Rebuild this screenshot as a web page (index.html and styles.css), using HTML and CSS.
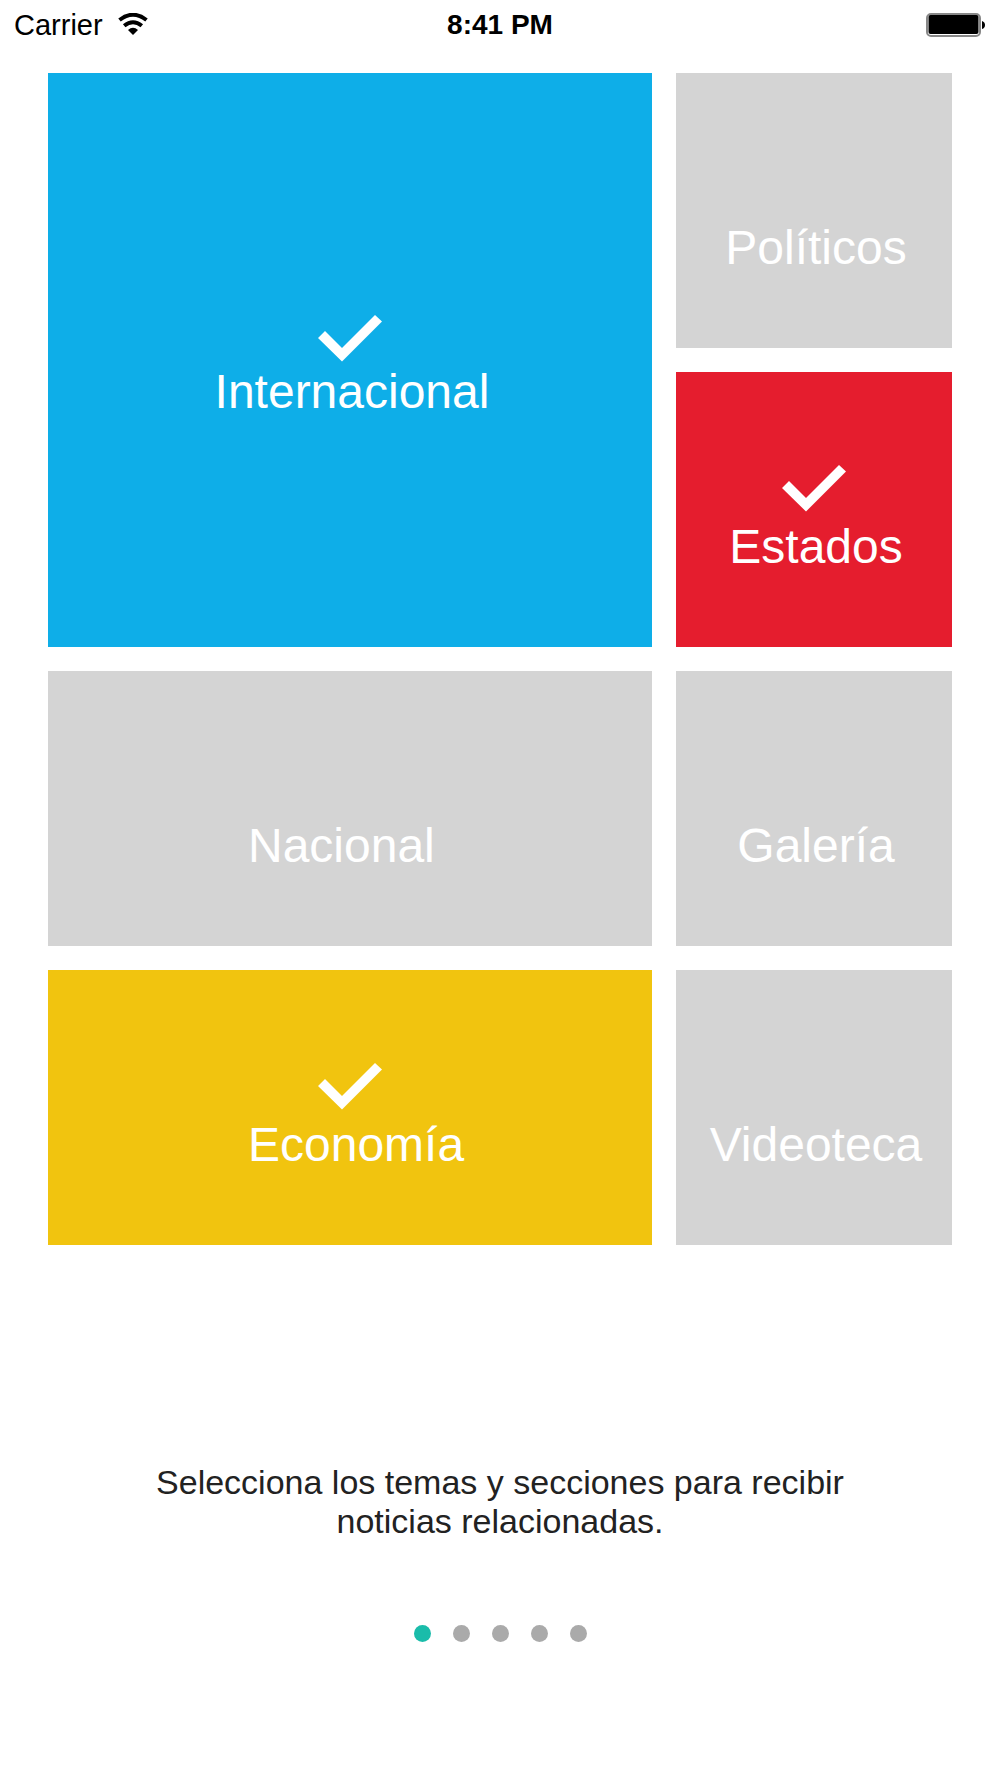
FILE: index.html
```
<!DOCTYPE html>
<html lang="es">
<head>
<meta charset="utf-8">
<meta name="viewport" content="width=device-width, initial-scale=1">
<title>Temas</title>
<link rel="stylesheet" href="styles.css">
</head>
<body>
<header class="status">
  <div class="carrier"><span>Carrier</span>
    <svg class="wifi" viewBox="0 0 30 22" aria-hidden="true"><path d="M1.500 7Q15-3.500 28.500 7" /><path d="M6.200 12.800Q15 5.800 23.800 12.800" /><path class="dot" d="M10 17Q15 12.500 20 17L15 22z" /></svg>
  </div>
  <time class="clock">8:41 PM</time>
  <svg class="battery" viewBox="0 0 60 24" aria-hidden="true"><rect class="shell" x="1" y="1" width="53" height="22" rx="4" /><rect x="2.500" y="2" width="50" height="19" rx="2" /><path d="M56 8q3 1 3 4t-3 4z" /></svg>
</header>
<main>
  <div class="tiles">
    <button class="tile tall blue" aria-pressed="true"><svg class="check" viewBox="0 0 64 48" aria-hidden="true"><path d="M0 24L7 17L24 34L57 1L64 7.500L24 47.500z" /></svg><span class="label">Internacional</span></button>
    <button class="tile" aria-pressed="false"><span class="label">Políticos</span></button>
    <button class="tile red" aria-pressed="true"><svg class="check" viewBox="0 0 64 48" aria-hidden="true"><path d="M0 24L7 17L24 34L57 1L64 7.500L24 47.500z" /></svg><span class="label">Estados</span></button>
    <button class="tile wide" aria-pressed="false"><span class="label">Nacional</span></button>
    <button class="tile" aria-pressed="false"><span class="label">Galería</span></button>
    <button class="tile wide yellow" aria-pressed="true"><svg class="check" viewBox="0 0 64 48" aria-hidden="true"><path d="M0 24L7 17L24 34L57 1L64 7.500L24 47.500z" /></svg><span class="label">Economía</span></button>
    <button class="tile" aria-pressed="false"><span class="label">Videoteca</span></button>
  </div>
  <p class="hint">Selecciona los temas y secciones para recibir noticias relacionadas.</p>
  <nav class="pages" aria-label="Páginas">
    <button class="page current" aria-label="Página 1" aria-current="step"></button>
    <button class="page" aria-label="Página 2"></button>
    <button class="page" aria-label="Página 3"></button>
    <button class="page" aria-label="Página 4"></button>
    <button class="page" aria-label="Página 5"></button>
  </nav>
</main>
</body>
</html>
```
FILE: styles.css
```
* { box-sizing: border-box; }
body { margin: 0; background: #fff; color: #222; font-family: "Liberation Sans", Arial, sans-serif; }
.status { display: grid; grid-template-columns: 1fr auto 1fr; align-items: center; height: 49px; padding: 1px 14px 0; color: #000; font-size: 28px; }
.carrier { display: flex; align-items: center; gap: 15px; font-size: 29px; }
.wifi { width: 30px; height: 22px; margin-bottom: 3px; fill: none; stroke: #000; stroke-width: 4; }
.wifi .dot { fill: #000; stroke: none; }
.clock { font-weight: bold; }
.battery { width: 60px; height: 24px; justify-self: end; }
.battery .shell { fill: none; stroke: #888; stroke-width: 2; }
.tiles { display: grid; grid-template-columns: 604fr 276fr; grid-auto-rows: 275px; gap: 24px; padding: 24px 48px 0; }
.tile { display: flex; flex-direction: column; align-items: center; justify-content: flex-end; border: 0; padding: 0 0 72px; background: #d4d4d4; color: #fff; font: 48px/56px "Liberation Sans", Arial, sans-serif; }
.label { padding-left: 4px; }
.tall { grid-row: span 2; padding-bottom: 227px; }
.wide .label { align-self: flex-start; padding-left: 200px; }
.blue { background: #0eaee8; }
.red { background: #e51d2e; }
.yellow { background: #f1c40f; }
.check { width: 64px; height: 48px; margin-bottom: 7px; fill: #fff; }
.tall .check { margin-bottom: 2px; }
.hint { margin: 218px auto 0; padding: 0 120px; text-align: center; font-size: 34px; line-height: 39px; }
.pages { display: flex; justify-content: center; gap: 22px; margin-top: 84px; }
.page { width: 17px; height: 17px; padding: 0; border: 0; border-radius: 50%; background: #aaa; }
.current { background: #1abcaa; }
```
